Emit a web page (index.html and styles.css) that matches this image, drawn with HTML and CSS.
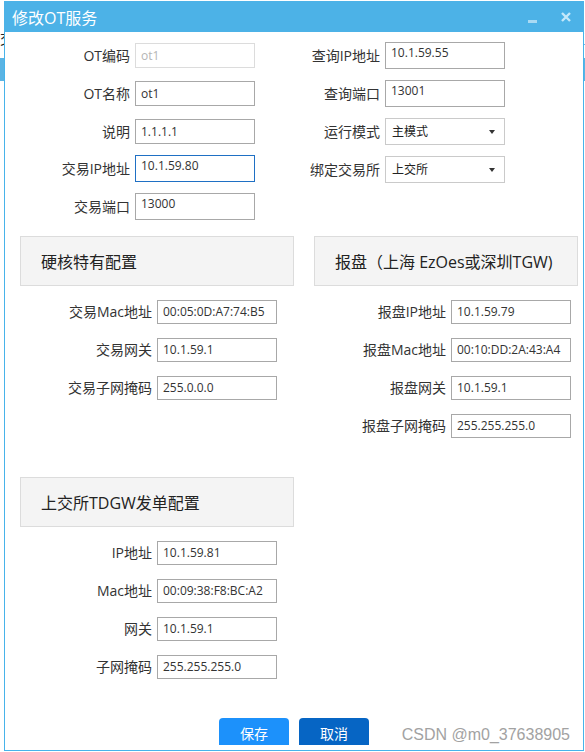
FILE: index.html
```html
<!DOCTYPE html>
<html lang="zh-CN">
<head>
<meta charset="utf-8">
<title>修改OT服务</title>
<link rel="stylesheet" href="styles.css">
</head>
<body>
<div class="backdrop">
  <div class="bg-line"><span class="bg-l">交</span><span class="bg-r">王</span></div>
  <div class="bg-bar"></div>
</div>
<div class="dialog">
  <div class="titlebar">
    <span class="title">修改OT服务</span>
    <div class="tools">
      <span class="min"></span>
      <svg class="close" width="10" height="10" viewBox="0 0 10 10"><path d="M1 1 L9 9 M9 1 L1 9" stroke="#c4e8fa" stroke-width="2.4" fill="none"/></svg>
    </div>
  </div>
  <div class="body">
    <div class="top">
      <div class="col col-left">
        <div class="field"><label>OT编码</label><div class="input disabled">ot1</div></div>
        <div class="field"><label>OT名称</label><div class="input">ot1</div></div>
        <div class="field"><label>说明</label><div class="input">1.1.1.1</div></div>
        <div class="field tall"><label>交易IP地址</label><div class="input focus">10.1.59.80</div></div>
        <div class="field tall"><label>交易端口</label><div class="input">13000</div></div>
      </div>
      <div class="col col-right">
        <div class="field tall"><label>查询IP地址</label><div class="input">10.1.59.55</div></div>
        <div class="field tall"><label>查询端口</label><div class="input">13001</div></div>
        <div class="field tall"><label>运行模式</label><div class="select"><span>主模式</span><i class="caret"></i></div></div>
        <div class="field tall"><label>绑定交易所</label><div class="select"><span>上交所</span><i class="caret"></i></div></div>
      </div>
    </div>
    <div class="sections">
      <section class="sec hw">
        <div class="sec-head">硬核特有配置</div>
        <div class="sec-fields">
          <div class="field"><label>交易Mac地址</label><div class="input">00:05:0D:A7:74:B5</div></div>
          <div class="field"><label>交易网关</label><div class="input">10.1.59.1</div></div>
          <div class="field"><label>交易子网掩码</label><div class="input">255.0.0.0</div></div>
        </div>
      </section>
      <section class="sec bp">
        <div class="sec-head">报盘（上海 EzOes或深圳TGW)</div>
        <div class="sec-fields">
          <div class="field"><label>报盘IP地址</label><div class="input">10.1.59.79</div></div>
          <div class="field"><label>报盘Mac地址</label><div class="input">00:10:DD:2A:43:A4</div></div>
          <div class="field"><label>报盘网关</label><div class="input">10.1.59.1</div></div>
          <div class="field"><label>报盘子网掩码</label><div class="input">255.255.255.0</div></div>
        </div>
      </section>
      <section class="sec hw">
        <div class="sec-head">上交所TDGW发单配置</div>
        <div class="sec-fields">
          <div class="field"><label>IP地址</label><div class="input">10.1.59.81</div></div>
          <div class="field"><label>Mac地址</label><div class="input">00:09:38:F8:BC:A2</div></div>
          <div class="field"><label>网关</label><div class="input">10.1.59.1</div></div>
          <div class="field"><label>子网掩码</label><div class="input">255.255.255.0</div></div>
        </div>
      </section>
    </div>
    <div class="actions">
      <button class="btn save">保存</button>
      <button class="btn cancel">取消</button>
    </div>
  </div>
  <div class="watermark">CSDN @m0_37638905</div>
</div>
</body>
</html>
```
FILE: styles.css
```css
html, body {
  margin: 0;
  padding: 0;
  background: #fff;
}
body {
  font-family: "Open Sans", "Noto Sans CJK SC", sans-serif;
  color: #333;
  width: 585px;
  height: 752px;
  overflow: hidden;
  position: relative;
}

/* page behind the window */
.backdrop {
  height: 752px;
}
.bg-line {
  padding-top: 31px;
  height: 16px;
  display: flex;
  justify-content: space-between;
  font-size: 14px;
  line-height: 16px;
  color: #222;
}
.bg-bar {
  margin-top: 11px;
  height: 23px;
  background: #5ab4e4;
}

/* window */
.dialog {
  position: absolute;
  left: 4px;
  top: 1px;
  width: 580px;
  height: 750px;
  box-sizing: border-box;
  border: 1px solid #47b3ea;
  border-top: none;
  background: #fff;
}
.titlebar {
  height: 31px;
  margin: 0 -1px;
  background: #4cb2e7;
  display: flex;
  justify-content: space-between;
  padding: 0 13px 0 8px;
}
.title {
  color: #fff;
  font-size: 16px;
  line-height: 20px;
  padding-top: 7px;
}
.tools {
  display: flex;
  align-items: flex-end;
  gap: 24px;
  margin-top: 11px;
  height: 10px;
}
.min {
  display: block;
  width: 9px;
  height: 3px;
  background: #a9daf4;
  margin-bottom: -1px;
}
.close { display: block; }

.body {
  height: 713px;
  overflow: hidden;
}

/* top two-column form */
.top {
  display: grid;
  grid-template-columns: 250px 250px;
}
.col-left { padding-top: 11px; }
.col-right { padding-top: 12px; }

.field {
  display: flex;
  align-items: center;
  height: 25px;
  margin-bottom: 13px;
}
.field.tall {
  height: 27px;
  margin-top: -2px;
}
label {
  width: 125px;
  margin-right: 5px;
  text-align: right;
  font-size: 14px;
  line-height: 20px;
  color: #333;
  white-space: nowrap;
}
.input {
  width: 120px;
  height: 100%;
  box-sizing: border-box;
  border: 1px solid #a8a8a8;
  padding: 0 5px;
  font-size: 12px;
  line-height: 18px;
  display: flex;
  align-items: center;
  color: #333;
  white-space: nowrap;
}
.tall .input {
  align-items: flex-start;
  padding-top: 1px;
}
.input.disabled {
  border-color: #dcdcdc;
  color: #b5b5b5;
}
.input.focus {
  border-color: #1f70c4;
}
.select {
  width: 120px;
  height: 100%;
  box-sizing: border-box;
  border: 1px solid #cacaca;
  padding: 0 9px 0 6px;
  font-size: 12px;
  line-height: 18px;
  display: flex;
  align-items: center;
  justify-content: space-between;
  color: #222;
}
.caret {
  display: block;
  width: 0;
  height: 0;
  border-left: 3px solid transparent;
  border-right: 3px solid transparent;
  border-top: 4px solid #333;
}

/* sections */
.sections {
  margin-top: 3px;
  display: grid;
  grid-template-columns: 295px 283px;
  row-gap: 39px;
  align-items: start;
}
.sec-head {
  height: 50px;
  box-sizing: border-box;
  border: 1px solid #dcdcdc;
  background: #f4f4f4;
  font-size: 16px;
  color: #222;
  display: flex;
  align-items: center;
  white-space: nowrap;
}
.hw .sec-head {
  margin-left: 15px;
  width: 274px;
  padding-left: 20px;
}
.bp .sec-head {
  margin-left: 14px;
  width: 264px;
  padding-left: 20px;
}
.sec-fields {
  padding-top: 14px;
  display: flex;
  flex-direction: column;
  gap: 14px;
}
.sec .field {
  height: 24px;
  margin: 0;
}
.hw label { width: 147px; }
.bp label { width: 146px; }

/* buttons */
.actions {
  margin-top: 39px;
  display: flex;
  justify-content: center;
  gap: 10px;
}
.btn {
  width: 70px;
  height: 30px;
  border: none;
  border-radius: 4px;
  color: #fff;
  font-family: "Noto Sans CJK SC", sans-serif;
  font-size: 14px;
  line-height: 30px;
  padding: 0;
}
.save { background: #1c91fb; }
.cancel { background: #0665c4; }

.watermark {
  position: absolute;
  right: 13px;
  top: 725px;
  font-family: "Liberation Sans", Arial, sans-serif;
  font-size: 16px;
  color: #a2a2a2;
  white-space: nowrap;
}
```
